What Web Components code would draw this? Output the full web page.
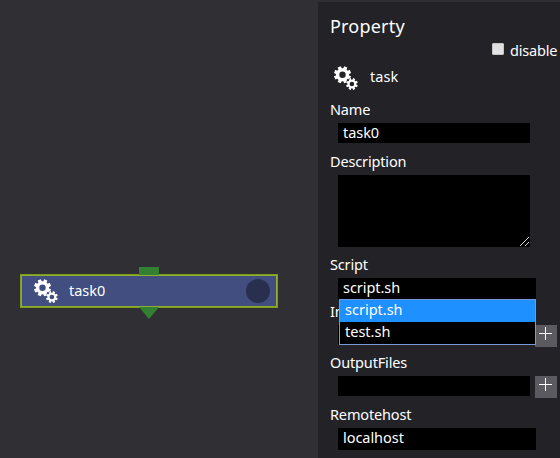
<!DOCTYPE html>
<html lang="en"><head><meta charset="utf-8"><title>Workflow</title>
<style>html,body{margin:0;height:100%;overflow:hidden;background:#302f34}
body{font:15px/20px "Noto Sans","Open Sans",sans-serif;color:#fff}</style></head>
<body><work-flow></work-flow>
<script>
const define=(name,html)=>customElements.define(name,class extends HTMLElement{
 constructor(){super();this.attachShadow({mode:'open'}).innerHTML=html;}
});
// Toothed outline with a round hole, filled even-odd.
function gear(cx,cy,ro,ri,hole){
 let p=[];
 for(let i=0;i<8;i++){
  const a=(i+.5)*Math.PI/4;
  for(const [r,d] of [[ri,-.27],[ro,-.2],[ro,.2],[ri,.27]])
   p.push((cx+r*Math.cos(a+d)).toFixed(2)+' '+(cy+r*Math.sin(a+d)).toFixed(2));
 }
 return `M${p.join('L')}ZM${cx-hole} ${cy}a${hole} ${hole} 0 1 0 ${2*hole} 0a${hole} ${hole} 0 1 0 ${-2*hole} 0Z`;
}
define('gear-icon',`<style>:host{display:block;width:24px;height:24px}svg{display:block;width:100%;height:100%}</style>
<svg viewBox="0 0 24 24"><path fill="#fff" fill-rule="evenodd" d="${gear(8.5,8.7,8.7,6.6,3.2)}${gear(17.9,18,6,4.4,2.3)}"/></svg>`);
define('text-box',`<style>:host{display:block;box-sizing:border-box;width:192px;height:20px;background:#000;padding-left:5px;line-height:18px;white-space:nowrap;letter-spacing:-.05px;font-size:14.5px}
:host([select]){width:198px;height:22px}</style><slot></slot>`);
define('text-area',`<style>:host{display:flex;width:192px;height:72px;background:#000;align-items:flex-end;justify-content:flex-end}svg{width:11px;height:11px}</style>
<svg viewBox="0 0 11 11"><path d="M1 10L10 1M6 10L10 6" stroke="#d8d8d8" stroke-width="1" fill="none"/></svg>`);
define('add-button',`<style>:host{display:block;width:22px;height:22px;background:#5b5a60;margin-left:5px}svg{display:block}</style>
<svg width="22" height="22"><path d="M4 8.5H17M10.5 2V15" stroke="#fff"/></svg>`);
define('form-field',`<style>:host{display:block;position:relative;height:52px}.l{height:23px;line-height:18px;letter-spacing:-.15px;font-size:14.5px;white-space:nowrap}.c{display:flex;padding-left:8px}</style>
<div class="l"><slot name="label"></slot></div><div class="c"><slot></slot></div>`);
define('option-menu',`<style>:host{display:block;position:absolute;left:9px;top:44px;width:197px;height:46px;box-sizing:border-box;border:1px solid #7698d8;background:#000;z-index:2;font-size:14.5px;letter-spacing:0}
div{height:22px;padding-left:5px;line-height:18px}.sel{background:#1e90ff}</style>
<div class="sel">script.sh</div><div>test.sh</div>`);
define('task-node',`<style>:host{display:block;position:absolute;left:20px;top:267px;width:258px;height:53px}
.bar{display:flex;align-items:center;box-sizing:border-box;height:34px;margin-top:7px;border:1px solid #7c9e18;background:#424e80;box-shadow:inset 0 0 0 1px #8dae2e;padding:0 7px 0 13px}
.in{position:absolute;left:119px;top:0;width:20px;height:8px;background:#338033}
.out{position:absolute;left:119px;top:40px;width:20px;height:12px;background:#338033;clip-path:polygon(0 0,100% 0,50% 100%)}
span{margin:-2px 0 0 11px;flex:1;font-size:14.5px;letter-spacing:0}.dot{width:24px;height:24px;border-radius:50%;background:#29304e}</style>
<div class="bar"><gear-icon></gear-icon><span>task0</span><div class="dot"></div></div><div class="in"></div><div class="out"></div>`);
define('property-panel',`<style>:host{display:block;box-sizing:border-box;width:242px;height:456px;margin:2px 0 0 auto;background:#232227;padding:11px 0 0 12px}
h1{font-size:18px;line-height:26px;font-weight:400;margin:0;height:26px;letter-spacing:.2px}
.dis{display:flex;height:24px;line-height:22px;padding-left:162px;letter-spacing:-.2px;font-size:14.5px}
.dis i{box-sizing:border-box;width:12px;height:12px;margin:4px 6px 0 0;border:1px solid #c4c4c4;border-radius:1px;background:linear-gradient(#ddd,#e5e5e5)}
.type{display:flex;height:37px;padding-left:4px}.type gear-icon{margin-top:3px}.type span{margin:3px 0 0 12px;font-size:14.5px;letter-spacing:.1px}</style>
<h1>Property</h1><div class="dis"><i></i><span>disable</span></div>
<div class="type"><gear-icon></gear-icon><span>task</span></div>
<form-field><span slot="label">Name</span><text-box>task0</text-box></form-field>
<form-field style="height:103px"><span slot="label">Description</span><text-area></text-area></form-field>
<form-field style="height:47px"><span slot="label">Script</span><text-box select>script.sh</text-box><option-menu></option-menu></form-field>
<form-field style="height:51px"><span slot="label">InputFiles</span><text-box></text-box><add-button></add-button></form-field>
<form-field><span slot="label">OutputFiles</span><text-box></text-box><add-button></add-button></form-field>
<form-field><span slot="label">Remotehost</span><text-box select>localhost</text-box></form-field>`);
define('work-flow',`<style>:host{display:flex;height:458px;background:#302f34}</style><task-node></task-node><property-panel></property-panel>`);
</script></body></html>
